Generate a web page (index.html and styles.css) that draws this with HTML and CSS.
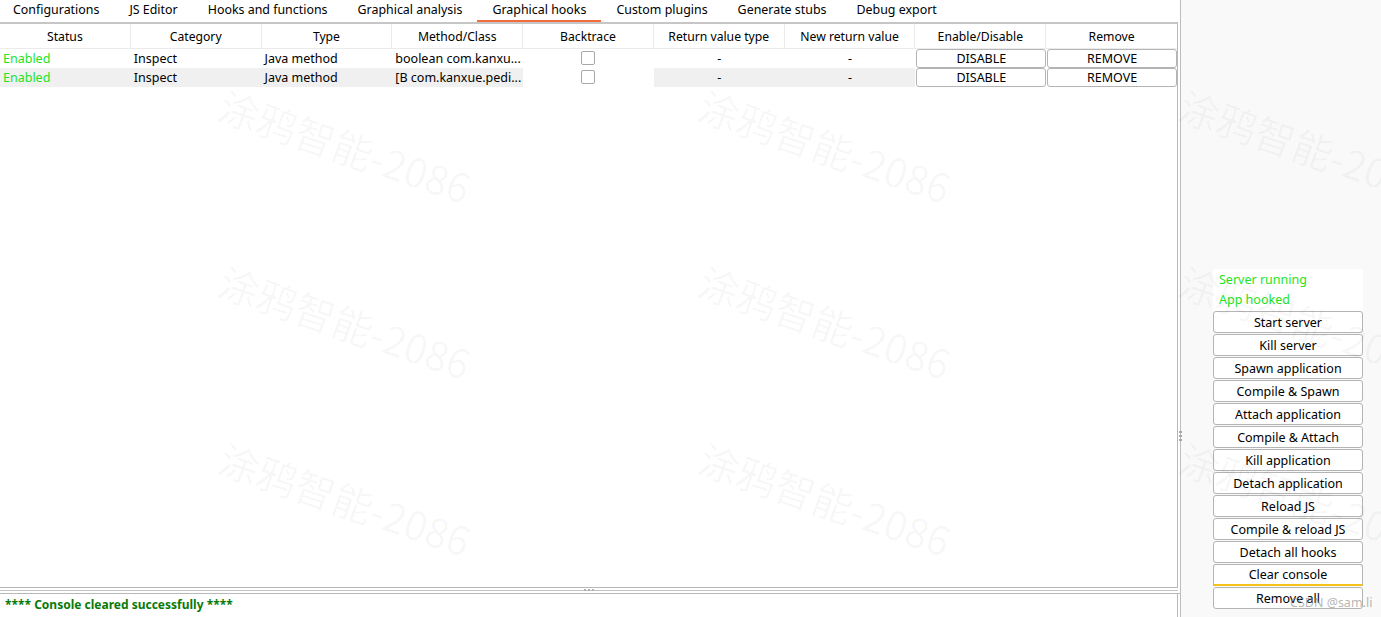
FILE: index.html
```html
<!DOCTYPE html>
<html>
<head>
<meta charset="utf-8">
<link rel="stylesheet" href="styles.css">
</head>
<body>
<div class="app">
  <div class="main">
    <div class="tabs">
      <div class="tab">Configurations</div>
      <div class="tab">JS Editor</div>
      <div class="tab">Hooks and functions</div>
      <div class="tab">Graphical analysis</div>
      <div class="tab active">Graphical hooks</div>
      <div class="tab">Custom plugins</div>
      <div class="tab">Generate stubs</div>
      <div class="tab">Debug export</div>
    </div>
    <div class="frame table-frame">
      <div class="grid head">
        <div class="hc">Status</div>
        <div class="hc">Category</div>
        <div class="hc">Type</div>
        <div class="hc">Method/Class</div>
        <div class="hc">Backtrace</div>
        <div class="hc">Return value type</div>
        <div class="hc">New return value</div>
        <div class="hc">Enable/Disable</div>
        <div class="hc last">Remove</div>
      </div>
      <div class="grid row">
        <div class="c green">Enabled</div>
        <div class="c">Inspect</div>
        <div class="c">Java method</div>
        <div class="c">boolean com.kanxu...</div>
        <div class="c center white"><span class="cb"></span></div>
        <div class="c center">-</div>
        <div class="c center">-</div>
        <div class="c btncell"><button class="tbtn">DISABLE</button></div>
        <div class="c btncell"><button class="tbtn">REMOVE</button></div>
      </div>
      <div class="grid row alt">
        <div class="c green">Enabled</div>
        <div class="c">Inspect</div>
        <div class="c">Java method</div>
        <div class="c">[B com.kanxue.pedi...</div>
        <div class="c center white"><span class="cb"></span></div>
        <div class="c center">-</div>
        <div class="c center">-</div>
        <div class="c btncell white"><button class="tbtn">DISABLE</button></div>
        <div class="c btncell white"><button class="tbtn">REMOVE</button></div>
      </div>
    </div>
    <div class="hsplit"><span class="dots h"></span></div>
    <div class="frame console">
      <div class="console-line">**** Console cleared successfully ****</div>
    </div>
  </div>
  <div class="vsplit"><span class="dots v"></span></div>
  <div class="side">
    <div class="status">
      <div class="st">Server running</div>
      <div class="st">App hooked</div>
    </div>
    <button class="sbtn">Start server</button>
    <button class="sbtn">Kill server</button>
    <button class="sbtn">Spawn application</button>
    <button class="sbtn">Compile &amp; Spawn</button>
    <button class="sbtn">Attach application</button>
    <button class="sbtn">Compile &amp; Attach</button>
    <button class="sbtn">Kill application</button>
    <button class="sbtn">Detach application</button>
    <button class="sbtn">Reload JS</button>
    <button class="sbtn">Compile &amp; reload JS</button>
    <button class="sbtn">Detach all hooks</button>
    <button class="sbtn focus">Clear console</button>
    <button class="sbtn">Remove all</button>
  </div>
</div>
<div class="wm-layer">
  <span class="wm" style="left:221px;top:83px">涂鸦智能-2086</span>
  <span class="wm" style="left:701px;top:83px">涂鸦智能-2086</span>
  <span class="wm" style="left:1181px;top:83px">涂鸦智能-2086</span>
  <span class="wm" style="left:221px;top:259px">涂鸦智能-2086</span>
  <span class="wm" style="left:701px;top:259px">涂鸦智能-2086</span>
  <span class="wm" style="left:1181px;top:259px">涂鸦智能-2086</span>
  <span class="wm" style="left:221px;top:436px">涂鸦智能-2086</span>
  <span class="wm" style="left:701px;top:436px">涂鸦智能-2086</span>
  <span class="wm" style="left:1181px;top:436px">涂鸦智能-2086</span>
</div>
<div class="csdn">CSDN @sam.li</div>
</body>
</html>
```
FILE: styles.css
```css
* { box-sizing: border-box; }
html, body {
  margin: 0;
  padding: 0;
  width: 1381px;
  height: 617px;
  overflow: hidden;
  background: #fff;
  font-family: "Noto Sans", "Noto Sans CJK SC", sans-serif;
  font-size: 12.5px;
  color: #000;
}
.app {
  display: flex;
  height: 617px;
  position: relative;
}
.main {
  width: 1180px;
  display: flex;
  flex-direction: column;
  background: #fff;
}
.tabs {
  display: flex;
  height: 22px;
  margin-left: -2px;
  font-size: 12.42px;
}
.tab {
  padding: 0 15px;
  height: 22px;
  line-height: 19px;
  white-space: nowrap;
}
.tab.active {
  border-bottom: 2px solid #f26b3a;
}
.frame {
  width: 1178px;
  border-right: 1px solid #b8b8b8;
}
.table-frame {
  flex: 1;
  border-top: 2px solid #c6c6c6;
  border-bottom: 1px solid #b8b8b8;
}
.grid {
  display: grid;
  grid-template-columns: repeat(9, 1fr);
}
.head {
  height: 25px;
  border-bottom: 1px solid #ebebeb;
  font-size: 12.2px;
}
.hc {
  text-align: center;
  line-height: 25px;
  border-right: 1px solid #ebebeb;
}
.hc.last { border-right: none; }
.row { height: 19px; }
.c {
  line-height: 19px;
  padding-left: 3px;
  white-space: nowrap;
  overflow: hidden;
}
.alt .c { background: #f0f0f0; }
.alt .c.white { background: #fff; }
.center { text-align: center; padding-left: 0; }
.green { color: #1ee41e; }
.cb {
  display: inline-block;
  width: 14px;
  height: 14px;
  border: 1px solid #a8a8a8;
  border-radius: 2px;
  background: #fff;
  vertical-align: middle;
  margin-top: -3px;
}
.btncell { padding: 0 0 0 1px; }
.tbtn {
  display: block;
  width: 100%;
  height: 19px;
  margin: 0;
  padding: 0;
  border: 1px solid #b4b4b4;
  border-radius: 3px;
  background: #fff;
  font: inherit;
  line-height: 17px;
  color: #000;
}
.hsplit {
  height: 6px;
  display: flex;
  align-items: center;
  justify-content: center;
  border-bottom: 1px solid #b8b8b8;
  position: relative;
}
.hsplit::before {
  content: "";
  position: absolute;
  left: 0;
  width: 1178px;
  top: 2px;
  height: 1px;
  background: #c4c4c4;
}
.dots {
  position: relative;
  z-index: 1;
  display: block;
}
.dots.h {
  width: 10px;
  height: 2px;
  background: repeating-linear-gradient(90deg, #b0b0b0 0 2px, transparent 2px 4px);
  margin-left: -2px;
  margin-top: -1px;
}
.console {
  height: 23px;
}
.console-line {
  padding-left: 5px;
  line-height: 22px;
  font-size: 12px;
  font-weight: bold;
  color: #087a08;
}
.vsplit {
  width: 1px;
  background: #bdbdbd;
  display: flex;
  align-items: center;
  justify-content: center;
}
.dots.v {
  width: 3px;
  height: 12px;
  flex: none;
  background: repeating-linear-gradient(180deg, #a8a8a8 0 2px, transparent 2px 4px);
  margin-top: 256px;
}
.side {
  flex: 1;
  background: #f9f9f9;
  display: flex;
  flex-direction: column;
  justify-content: flex-end;
  padding: 0 0 8px 32px;
}
.status {
  width: 150px;
  height: 42px;
  background: #fff;
  padding: 1px 0 0 6px;
}
.st {
  color: #1ee41e;
  height: 20px;
  line-height: 19px;
}
.sbtn {
  width: 150px;
  height: 22px;
  margin: 0 0 1px 0;
  padding: 0;
  border: 1px solid #b4b4b4;
  border-radius: 3px;
  background: #fff;
  font: inherit;
  color: #000;
  line-height: 19px;
}
.sbtn.focus {
  border-bottom: 2px solid #f5c21a;
  border-radius: 3px 3px 0 0;
}
.sbtn:last-child { margin-bottom: 0; }
.wm-layer {
  position: absolute;
  left: 0;
  top: 0;
  width: 1381px;
  height: 617px;
  pointer-events: none;
  overflow: hidden;
}
.wm {
  position: absolute;
  font-family: "Noto Sans CJK SC", "Noto Sans", sans-serif;
  font-size: 40px;
  color: rgba(0, 0, 0, 0.035);
  white-space: nowrap;
  transform: rotate(19deg);
  transform-origin: 0 50%;
  line-height: 1;
}
.csdn {
  position: absolute;
  left: 1290px;
  top: 594px;
  font-size: 12.5px;
  color: rgba(140, 140, 140, 0.65);
  pointer-events: none;
}
```
